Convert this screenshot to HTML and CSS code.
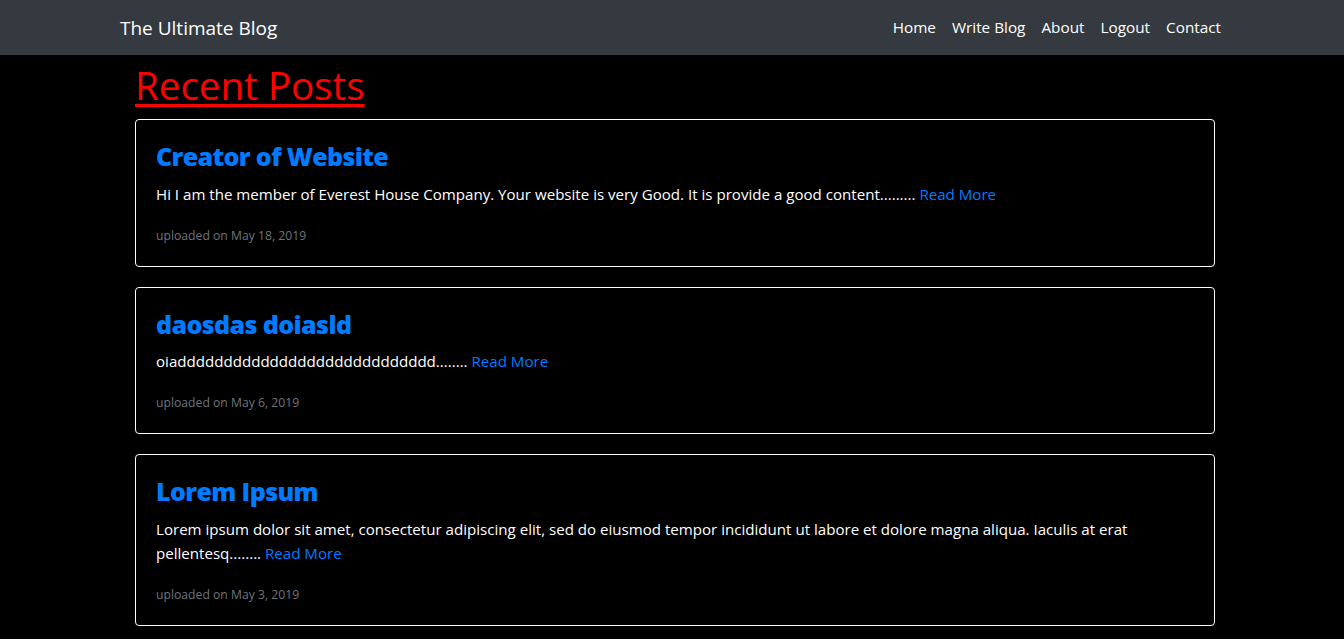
FILE: index.html
```html
<!DOCTYPE html>
<html lang="en">
<head>
<meta charset="utf-8">
<title>The Ultimate Blog</title>
<link rel="stylesheet" href="styles.css">
</head>
<body>
<nav class="navbar">
  <div class="nav-inner">
    <a class="brand" href="#">The Ultimate Blog</a>
    <ul class="nav-links">
      <li><a href="#">Home</a></li>
      <li><a href="#">Write Blog</a></li>
      <li><a href="#">About</a></li>
      <li><a href="#">Logout</a></li>
      <li><a href="#">Contact</a></li>
    </ul>
  </div>
</nav>
<main class="content">
  <h1 class="page-title">Recent Posts</h1>
  <article class="card">
    <h3 class="post-title">Creator of Website</h3>
    <p class="post-text">Hi I am the member of Everest House Company. Your website is very Good. It is provide a good content......... <a href="#">Read More</a></p>
    <p class="post-date">uploaded on May 18, 2019</p>
  </article>
  <article class="card">
    <h3 class="post-title">daosdas doiasld</h3>
    <p class="post-text">oiadddddddddddddddddddddddddddd........ <a href="#">Read More</a></p>
    <p class="post-date">uploaded on May 6, 2019</p>
  </article>
  <article class="card">
    <h3 class="post-title">Lorem Ipsum</h3>
    <p class="post-text">Lorem ipsum dolor sit amet, consectetur adipiscing elit, sed do eiusmod tempor incididunt ut labore et dolore magna aliqua. Iaculis at erat pellentesq........ <a href="#">Read More</a></p>
    <p class="post-date">uploaded on May 3, 2019</p>
  </article>
</main>
</body>
</html>
```
FILE: styles.css
```css
* { box-sizing: border-box; }
html, body {
  margin: 0;
  background: #000;
  color: #fff;
  font-family: "Open Sans", "Noto Sans", Arial, sans-serif;
  font-size: 15.1px;
  line-height: 24px;
}
a { text-decoration: none; color: #007bff; }

.navbar {
  background: #343a40;
  height: 55px;
}
.nav-inner {
  width: 1112px;
  margin-left: 117px;
  height: 100%;
  display: flex;
  align-items: center;
  justify-content: space-between;
  padding-left: 3px;
}
.brand {
  color: #fff;
  font-size: 19px;
  line-height: 30px;
}
.nav-links {
  list-style: none;
  margin: 0;
  padding: 0;
  display: flex;
}
.nav-links a {
  display: block;
  color: #fff;
  padding: 7px 8px 9px;
  font-size: 15.3px;
  line-height: 24px;
}

.content {
  width: 1080px;
  margin: 0 0 0 135px;
  padding-top: 6px;
}
.page-title {
  margin: 0 0 10px;
  color: #ff0000;
  font-size: 38.5px;
  line-height: 48px;
  font-weight: 500;
  text-decoration: underline;
  text-decoration-thickness: 3px;
  text-underline-offset: 4px;
  display: inline-block;
}
.card {
  border: 1px solid #fff;
  border-radius: 4px;
  padding: 20px 20px 18px;
  margin-bottom: 20px;
}
.post-title {
  margin: 0 0 8px;
  color: #007bff;
  font-size: 25px;
  line-height: 33.6px;
  font-weight: 800;
  letter-spacing: -0.6px;
}
.post-text {
  margin: 0 0 16px;
}
.post-date {
  margin: 0;
  padding-top: 2px;
  color: #6c757d;
  font-size: 12.2px;
  line-height: 24px;
}
```
